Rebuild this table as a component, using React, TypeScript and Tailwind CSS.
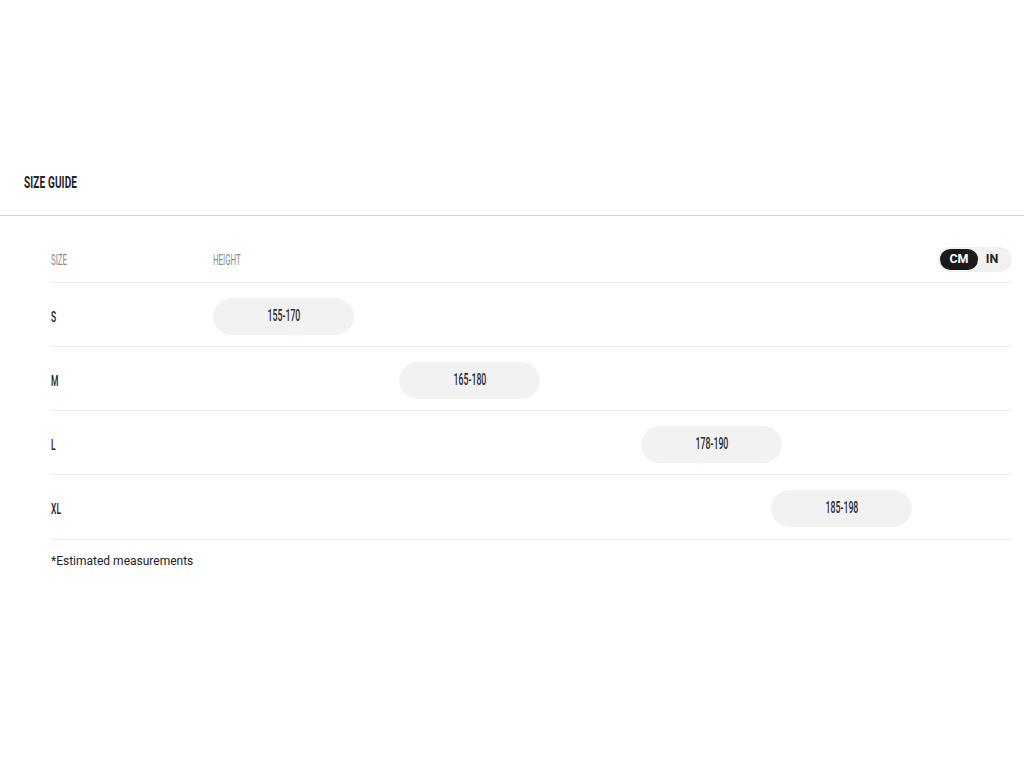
const rows = [
  { size: "S", range: "155-170", offset: "ml-0" },
  { size: "M", range: "165-180", offset: "ml-[186px]" },
  { size: "L", range: "178-190", offset: "ml-[428px]" },
  { size: "XL", range: "185-198", offset: "ml-[558px]" },
]

const Cond = ({ children, className = "" }: { children: React.ReactNode; className?: string }) => (
  <span className={`inline-block font-['Roboto',sans-serif] ${className}`}>{children}</span>
)

const App = () => {
  return (
    <div className="min-h-screen bg-white text-[#1a1a1a]">
      <div className="h-[151px]" />
      <div className="flex h-[65px] items-center border-b border-[#d6d6d6] pl-6">
        <Cond className="origin-left scale-x-[0.59] text-[17px] font-bold tracking-[0.2px] text-[#222]">SIZE GUIDE</Cond>
      </div>

      <div className="pl-[51px] pr-3 pt-5">
        <div className="flex h-[47px] items-center border-b border-[#ececec]">
          <div className="w-[162px]">
            <Cond className="origin-left scale-x-[0.56] text-[14px] font-normal text-[#8a8a8a]">SIZE</Cond>
          </div>
          <div className="flex-1">
            <Cond className="origin-left scale-x-[0.56] text-[14px] font-normal text-[#8a8a8a]">HEIGHT</Cond>
          </div>
          <div className="flex h-[25px] w-[74px] items-center rounded-full bg-[#f1f1f1] px-[2px] font-['Roboto',sans-serif] text-[12.5px] font-bold">
            <div className="flex h-[21px] w-[38px] items-center justify-center rounded-full bg-[#1a1a1a] text-white">CM</div>
            <div className="flex flex-1 items-center justify-center pr-1 text-[#222]">IN</div>
          </div>
        </div>

        {rows.map((r, i) => (
          <div
            key={r.size}
            className={`flex items-center border-b border-[#ececec] pt-[15px] ${i === rows.length - 1 ? "pb-[12px]" : "pb-[11px]"}`}
          >
            <div className="w-[162px]">
              <Cond className="origin-left scale-x-[0.55] text-[15.5px] font-medium text-[#222]">{r.size}</Cond>
            </div>
            <div className="flex-1">
              <div className={`flex h-[37px] w-[141px] items-center justify-center rounded-full bg-[#f2f2f2] ${r.offset}`}>
                <Cond className="scale-x-[0.53] text-[16.5px] font-medium text-[#2a2a2a]">{r.range}</Cond>
              </div>
            </div>
          </div>
        ))}

        <p className="mt-[12px] font-['Roboto',sans-serif] text-[12px] text-[#222]">*Estimated measurements</p>
      </div>
    </div>
  )
}

export default App
